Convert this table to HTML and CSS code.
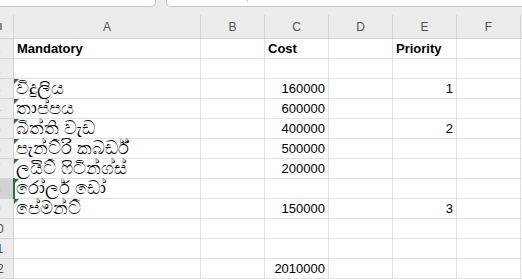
FILE: index.html
```html
<!DOCTYPE html>
<html lang="si">
<head>
<meta charset="utf-8">
<title>Sheet</title>
<link rel="stylesheet" href="styles.css">
</head>
<body>
<div class="topbar">
  <div class="tab tab-left"></div>
  <div class="tab tab-right"><span class="tab-sep"></span></div>
</div>
<div class="sheet">
  <div class="corner"><span class="corner-mark"></span></div>
  <div class="colhead">A</div>
  <div class="colhead">B</div>
  <div class="colhead">C</div>
  <div class="colhead">D</div>
  <div class="colhead">E</div>
  <div class="colhead">F</div>
  <div class="colhead edge"></div>

  <div class="rowhead"><span>1</span></div>
  <div class="cell bold">Mandatory</div><div class="cell"></div><div class="cell bold">Cost</div><div class="cell"></div><div class="cell bold">Priority</div><div class="cell"></div><div class="cell edge"></div>

  <div class="rowhead"><span>2</span></div>
  <div class="cell"></div><div class="cell"></div><div class="cell"></div><div class="cell"></div><div class="cell"></div><div class="cell"></div><div class="cell edge"></div>

  <div class="rowhead"><span>3</span></div>
  <div class="cell si flag">විදුලිය</div><div class="cell"></div><div class="cell num">160000</div><div class="cell"></div><div class="cell num">1</div><div class="cell"></div><div class="cell edge"></div>

  <div class="rowhead"><span>4</span></div>
  <div class="cell si flag">තාප්පය</div><div class="cell"></div><div class="cell num">600000</div><div class="cell"></div><div class="cell"></div><div class="cell"></div><div class="cell edge"></div>

  <div class="rowhead"><span>5</span></div>
  <div class="cell si flag">බිත්ති වැඩ</div><div class="cell"></div><div class="cell num">400000</div><div class="cell"></div><div class="cell num">2</div><div class="cell"></div><div class="cell edge"></div>

  <div class="rowhead"><span>6</span></div>
  <div class="cell si flag">පැන්ට්රි කබර්ඩ්</div><div class="cell"></div><div class="cell num">500000</div><div class="cell"></div><div class="cell"></div><div class="cell"></div><div class="cell edge"></div>

  <div class="rowhead"><span>7</span></div>
  <div class="cell si flag">ලයිට් ෆිටින්ග්ස්</div><div class="cell"></div><div class="cell num">200000</div><div class="cell"></div><div class="cell"></div><div class="cell"></div><div class="cell edge"></div>

  <div class="rowhead selected"><span>8</span></div>
  <div class="cell si flag active">රෝලර් ඩෝ</div><div class="cell"></div><div class="cell"></div><div class="cell"></div><div class="cell"></div><div class="cell"></div><div class="cell edge"></div>

  <div class="rowhead"><span>9</span></div>
  <div class="cell si flag">පේමන්ට්</div><div class="cell"></div><div class="cell num">150000</div><div class="cell"></div><div class="cell num">3</div><div class="cell"></div><div class="cell edge"></div>

  <div class="rowhead"><span>10</span></div>
  <div class="cell"></div><div class="cell"></div><div class="cell"></div><div class="cell"></div><div class="cell"></div><div class="cell"></div><div class="cell edge"></div>

  <div class="rowhead"><span>11</span></div>
  <div class="cell"></div><div class="cell"></div><div class="cell"></div><div class="cell"></div><div class="cell"></div><div class="cell"></div><div class="cell edge"></div>

  <div class="rowhead"><span>12</span></div>
  <div class="cell"></div><div class="cell"></div><div class="cell num">2010000</div><div class="cell"></div><div class="cell"></div><div class="cell"></div><div class="cell edge"></div>
</div>
</body>
</html>
```
FILE: styles.css
```css
* { box-sizing: border-box; }
html, body { margin: 0; padding: 0; }
body {
  width: 522px;
  height: 279px;
  overflow: hidden;
  background: #ffffff;
  font-family: "Liberation Sans", Arial, sans-serif;
}
.topbar {
  height: 15px;
  background: #ececec;
  display: flex;
  gap: 10px;
  align-items: flex-start;
  overflow: hidden;
}
.tab {
  height: 7px;
  background: #ffffff;
  border: 1px solid #c4c4c4;
  border-top: none;
  border-radius: 0 0 5px 5px;
}
.tab-left { width: 160px; margin-left: -4px; }
.tab-right {
  flex: 1;
  margin-right: -6px;
  padding-left: 80px;
}
.tab-sep {
  display: block;
  width: 1px;
  height: 2px;
  background: #c8c8c8;
}

.sheet {
  display: grid;
  grid-template-columns: 14px 187px 64px 64px 64px 64px 64px 10px;
  grid-template-rows: 24px repeat(12, 20px);
  width: 531px;
}
.corner {
  background: #ececec;
  border-right: 1px solid #d4d4d4;
  border-bottom: 1px solid #d4d4d4;
  position: relative;
}
.corner-mark {
  position: absolute;
  left: 0;
  top: 8px;
  width: 2px;
  height: 7px;
  background: #8a8a8a;
}
.colhead {
  background: #ececec;
  border-right: 1px solid #d4d4d4;
  border-bottom: 1px solid #d4d4d4;
  color: #555555;
  font-size: 12px;
  display: flex;
  align-items: center;
  justify-content: center;
  padding-top: 1px;
}
.rowhead {
  background: #ececec;
  border-right: 1px solid #d4d4d4;
  border-bottom: 1px solid #d4d4d4;
  overflow: hidden;
  color: #4a4a4a;
  font-size: 12px;
  display: flex;
  align-items: center;
}
.rowhead span {
  flex: none;
  width: 26px;
  margin-left: -16px;
  text-align: center;
}
.rowhead.selected { background: #d2d2d2; color: #217346; }
.cell {
  border-right: 1px solid #e1e1e1;
  border-bottom: 1px solid #e1e1e1;
  font-size: 13px;
  line-height: 15px;
  color: #000000;
  padding: 0 3px 2px 3px;
  display: flex;
  align-items: flex-end;
  white-space: nowrap;
  position: relative;
}
.bold { font-weight: bold; }
.num { justify-content: flex-end; }
.si { font-size: 17.5px; line-height: 19px; padding-bottom: 0; padding-left: 2px; }
.flag::before {
  content: "";
  position: absolute;
  left: 0;
  top: 0;
  border-top: 5px solid #217346;
  border-right: 5px solid transparent;
}
.active::after {
  content: "";
  position: absolute;
  left: -1px;
  top: -1px;
  bottom: -1px;
  width: 2px;
  background: #217346;
}
```
